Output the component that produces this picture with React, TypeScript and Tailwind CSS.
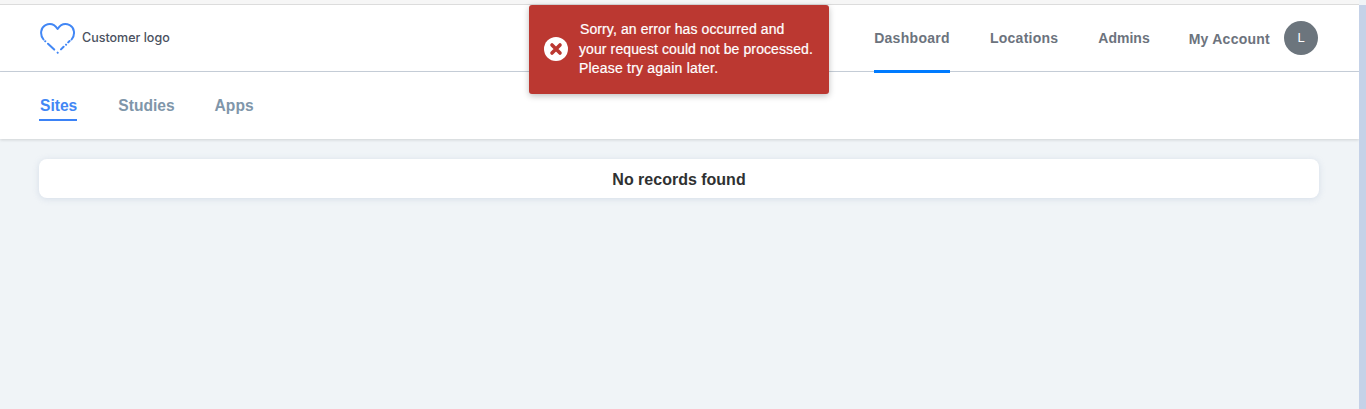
const NAV = [
  { label: 'Dashboard', active: true, className: 'mr-[40px] tracking-[0.3px]' },
  { label: 'Locations', active: false, className: 'mr-[40px] tracking-[0.25px]' },
  { label: 'Admins', active: false, className: 'mr-[39px] tracking-[0px]' },
]

const TABS = [
  { label: 'Sites', active: true },
  { label: 'Studies', active: false },
  { label: 'Apps', active: false },
]

function HeartLogo() {
  return (
    <svg width="36" height="31" viewBox="0 0 36 31" fill="none" stroke="#4287f5" strokeWidth="2" strokeLinecap="round" strokeLinejoin="round">
      <path d="M3.5 16.5C-0.5 11.5 0.8 4.5 5.5 2.2C10 0 14.6 1.6 17.6 6C20.6 1.6 25.2 0 29.7 2.2C34.4 4.5 35.6 11.5 31.6 16.5" />
      <path d="M5.2 18.2L5.3 18.3M8 20.8L14.2 26.6M17.6 29.6L17.7 29.7M21 26.4L23.6 23.8M26 21.6L26.1 21.7M28.2 19.4L29.6 18" />
    </svg>
  )
}

function ErrorToast() {
  return (
    <div className="absolute left-[529px] top-[5px] flex h-[89px] w-[300px] items-center rounded-[3px] bg-[#bb3831] pl-[15px] shadow-[0_2px_6px_rgba(0,0,0,0.25)]">
      <svg width="24" height="24" viewBox="0 0 24 24" className="mb-[1px] shrink-0">
        <circle cx="12" cy="12" r="12" fill="#ffffff" />
        <path d="M8 8L16 16M16 8L8 16" stroke="#bb3831" strokeWidth="3.6" strokeLinecap="round" />
      </svg>
      <div className="ml-[11px] font-['Liberation_Sans',sans-serif] text-[14px] leading-[19.5px] font-medium tracking-[0.1px] text-white [-webkit-text-stroke:0.2px_white]">
        <p className="pl-[1px]">Sorry, an error has occurred and</p>
        <p className="whitespace-nowrap">your request could not be processed.</p>
        <p className="tracking-[0.2px]">Please try again later.</p>
      </div>
    </div>
  )
}

export default function App() {
  return (
    <div className="relative flex h-[409px] w-[1366px] overflow-hidden bg-[#f0f4f7] font-['Liberation_Sans',sans-serif]">
      <div className="flex min-w-0 flex-1 flex-col">
        <div className="h-[5px] shrink-0 border-b border-[#dcdcdc] bg-[#f6f6f6]" />

        {/* Top bar */}
        <header className="flex h-[67px] shrink-0 items-stretch justify-between border-b border-[#c9d1dc] bg-white pr-[41px] pl-[40px]">
          <div className="flex items-center gap-[6px]">
            <HeartLogo />
            <span className="font-['Inter',sans-serif] text-[12.5px] font-medium text-[#4a5160]">Customer logo</span>
          </div>
          <div className="flex items-stretch">
            {NAV.map((item) => (
              <a
                key={item.label}
                className={`relative flex items-center text-[14px] font-bold text-[#6c737d] ${item.className} ${
                  item.active ? "after:absolute after:right-0 after:-bottom-[2px] after:left-0 after:h-[3px] after:bg-[#007bff] after:content-['']" : ''
                }`}
              >
                {item.label}
              </a>
            ))}
            <div className="flex items-center">
              <span className="pt-[2px] text-[14px] font-bold tracking-[0.25px] text-[#6c737d]">My Account</span>
              <span className="ml-[14px] flex h-[34px] w-[34px] items-center justify-center rounded-full bg-[#6c757d] text-[13px] text-white">L</span>
            </div>
          </div>
        </header>

        {/* Sub navigation */}
        <nav className="flex h-[67px] shrink-0 items-start gap-[40px] bg-white pt-[24px] pl-[40px] shadow-[0_1px_3px_rgba(0,0,0,0.14)]">
          {TABS.map((tab) => (
            <a
              key={tab.label}
              className={`border-b-2 pb-[3px] text-[15.6px] leading-[20px] font-bold ${
                tab.active ? '-ml-[1px] mr-[1px] border-[#3b82f6] pl-[1px] text-[#4287f5]' : 'border-transparent text-[#7f96aa]'
              }`}
            >
              {tab.label}
            </a>
          ))}
        </nav>

        <main className="flex-1 pt-[20px] pr-[40px] pl-[39px]">
          <div className="flex h-[39px] items-center justify-center rounded-[8px] bg-white pt-[2px] text-[16px] font-bold text-[#2f3132] shadow-[0_1px_6px_rgba(150,170,200,0.3)]">
            No records found
          </div>
        </main>
      </div>

      {/* Scrollbar strip */}
      <div className="mt-[5px] w-[7px] shrink-0 bg-[#c5d2e8]" />

      <ErrorToast />
    </div>
  )
}
